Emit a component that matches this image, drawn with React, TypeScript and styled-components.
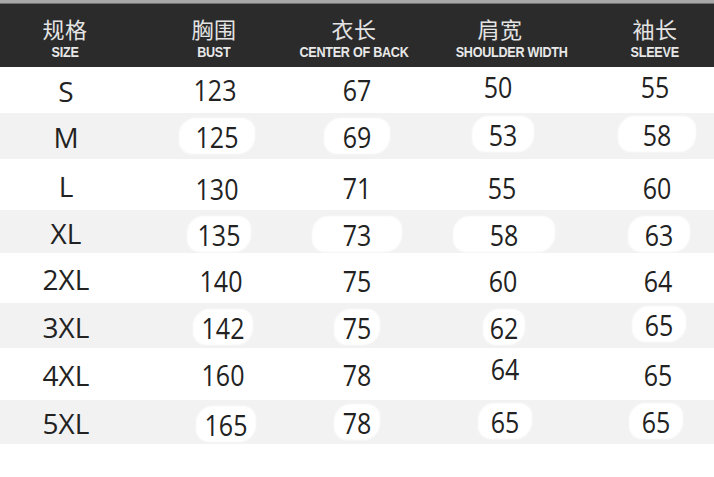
import React from "react";
import styled, { createGlobalStyle } from "styled-components";

const GlobalStyle = createGlobalStyle`
  html, body {
    margin: 0;
    padding: 0;
    background: #fff;
  }
  body {
    font-family: "Open Sans", "Noto Sans", sans-serif;
  }
`;

const COLS = "132px 168px 114px 178px 122px";

const Chart = styled.div`
  width: 714px;
  height: 477px;
  background: #fff;
  overflow: hidden;
`;

const Header = styled.div`
  display: grid;
  grid-template-columns: ${COLS};
  height: 64px;
  background: #2b2b2b;
  border-top: 3px solid #a8a8a8;
  box-shadow: inset 0 1px 0 #6f6f6f;
`;

const HeadCell = styled.div<{ $dx?: number }>`
  display: flex;
  flex-direction: column;
  align-items: center;
  justify-content: center;
  gap: 6px;
  padding-top: 5px;
  transform: translateX(${(p) => p.$dx ?? 0}px);
`;

const HeadCn = styled.div`
  font-family: "Noto Sans CJK SC", "Noto Sans", sans-serif;
  font-size: 22px;
  line-height: 22px;
  color: #e4e4e4;
  letter-spacing: 0.5px;
`;

const HeadEn = styled.div<{ $dx?: number }>`
  font-family: "Liberation Sans", Arial, sans-serif;
  font-weight: 700;
  font-size: 15px;
  line-height: 13px;
  color: #e8e8e8;
  white-space: nowrap;
  letter-spacing: -0.3px;
  transform: translateX(${(p) => p.$dx ?? 0}px) scaleX(0.84);
`;

const Row = styled.div<{ $h: number; $shade: boolean }>`
  display: grid;
  grid-template-columns: ${COLS};
  height: ${(p) => p.$h}px;
  background: ${(p) => (p.$shade ? "#f2f2f2" : "#ffffff")};
`;

const Cell = styled.div`
  display: flex;
  align-items: center;
  justify-content: center;
`;

const SizeLabel = styled.span`
  font-family: "Open Sans", sans-serif;
  font-size: 28px;
  color: #222;
  line-height: 1;
  transform: translateY(1px);
`;

const Num = styled.span<{ $dx: number; $dy: number; $patch: number }>`
  display: inline-block;
  font-family: "Open Sans", sans-serif;
  font-size: 25px;
  line-height: 34px;
  color: #222;
  padding: 0 ${(p) => p.$patch}px;
  border-radius: 16px 12px 16px 12px;
  background: ${(p) => (p.$patch ? "#fff" : "transparent")};
  box-shadow: ${(p) => (p.$patch ? "0 0 2px 1px #fff" : "none")};
  transform: translate(${(p) => p.$dx}px, ${(p) => p.$dy}px);

  & > b {
    display: inline-block;
    font-weight: 400;
    transform: scaleY(1.2);
  }
`;

const heads = [
  { cn: "规格", en: "SIZE", dx: -1 },
  { cn: "胸围", en: "BUST", dx: -2 },
  { cn: "衣长", en: "CENTER OF BACK", dx: -3 },
  { cn: "肩宽", en: "SHOULDER WIDTH", dx: -3, enDx: 12 },
  { cn: "袖长", en: "SLEEVE", dx: 2 },
];

type V = [string, number, number, number]; // value, dx, dy, patch padding

const rows: { size: string; h: number; vals: V[] }[] = [
  { size: "S", h: 46, vals: [["123", -1, -1, 0], ["67", 0, -1, 0], ["50", -5, -4, 0], ["55", 2, -4, 0]] },
  { size: "M", h: 46, vals: [["125", 1, 0, 16], ["69", 0, 0, 18], ["53", 0, -2, 16], ["58", 4, -2, 24]] },
  { size: "L", h: 51, vals: [["130", 1, 3, 0], ["71", 0, 2, 0], ["55", -1, 2, 0], ["60", 4, 2, 0]] },
  { size: "XL", h: 43, vals: [["135", 3, 2, 10], ["73", 0, 2, 30], ["58", 1, 2, 36], ["63", 6, 2, 16]] },
  { size: "2XL", h: 50, vals: [["140", 5, 2, 0], ["75", 0, 2, 0], ["60", 0, 2, 0], ["64", 5, 2, 0]] },
  { size: "3XL", h: 45, vals: [["142", 7, 1, 8], ["75", 0, 1, 8], ["62", 1, 1, 6], ["65", 6, -2, 12]] },
  { size: "4XL", h: 52, vals: [["160", 7, 0, 0], ["78", 0, 0, 0], ["64", 2, -6, 0], ["65", 5, 0, 0]] },
  { size: "5XL", h: 44, vals: [["165", 10, 2, 8], ["78", 0, 0, 8], ["65", 2, -1, 12], ["65", 3, -1, 12]] },
];

export default function App() {
  return (
    <Chart>
      <GlobalStyle />
      <Header>
        {heads.map((h) => (
          <HeadCell key={h.cn} $dx={h.dx}>
            <HeadCn>{h.cn}</HeadCn>
            <HeadEn $dx={h.enDx}>{h.en}</HeadEn>
          </HeadCell>
        ))}
      </Header>
      {rows.map((r, i) => (
        <Row key={r.size} $h={r.h} $shade={i % 2 === 1}>
          <Cell>
            <SizeLabel>{r.size}</SizeLabel>
          </Cell>
          {r.vals.map(([v, dx, dy, patch], j) => (
            <Cell key={j}>
              <Num $dx={dx} $dy={dy} $patch={patch}>
                <b>{v}</b>
              </Num>
            </Cell>
          ))}
        </Row>
      ))}
    </Chart>
  );
}
